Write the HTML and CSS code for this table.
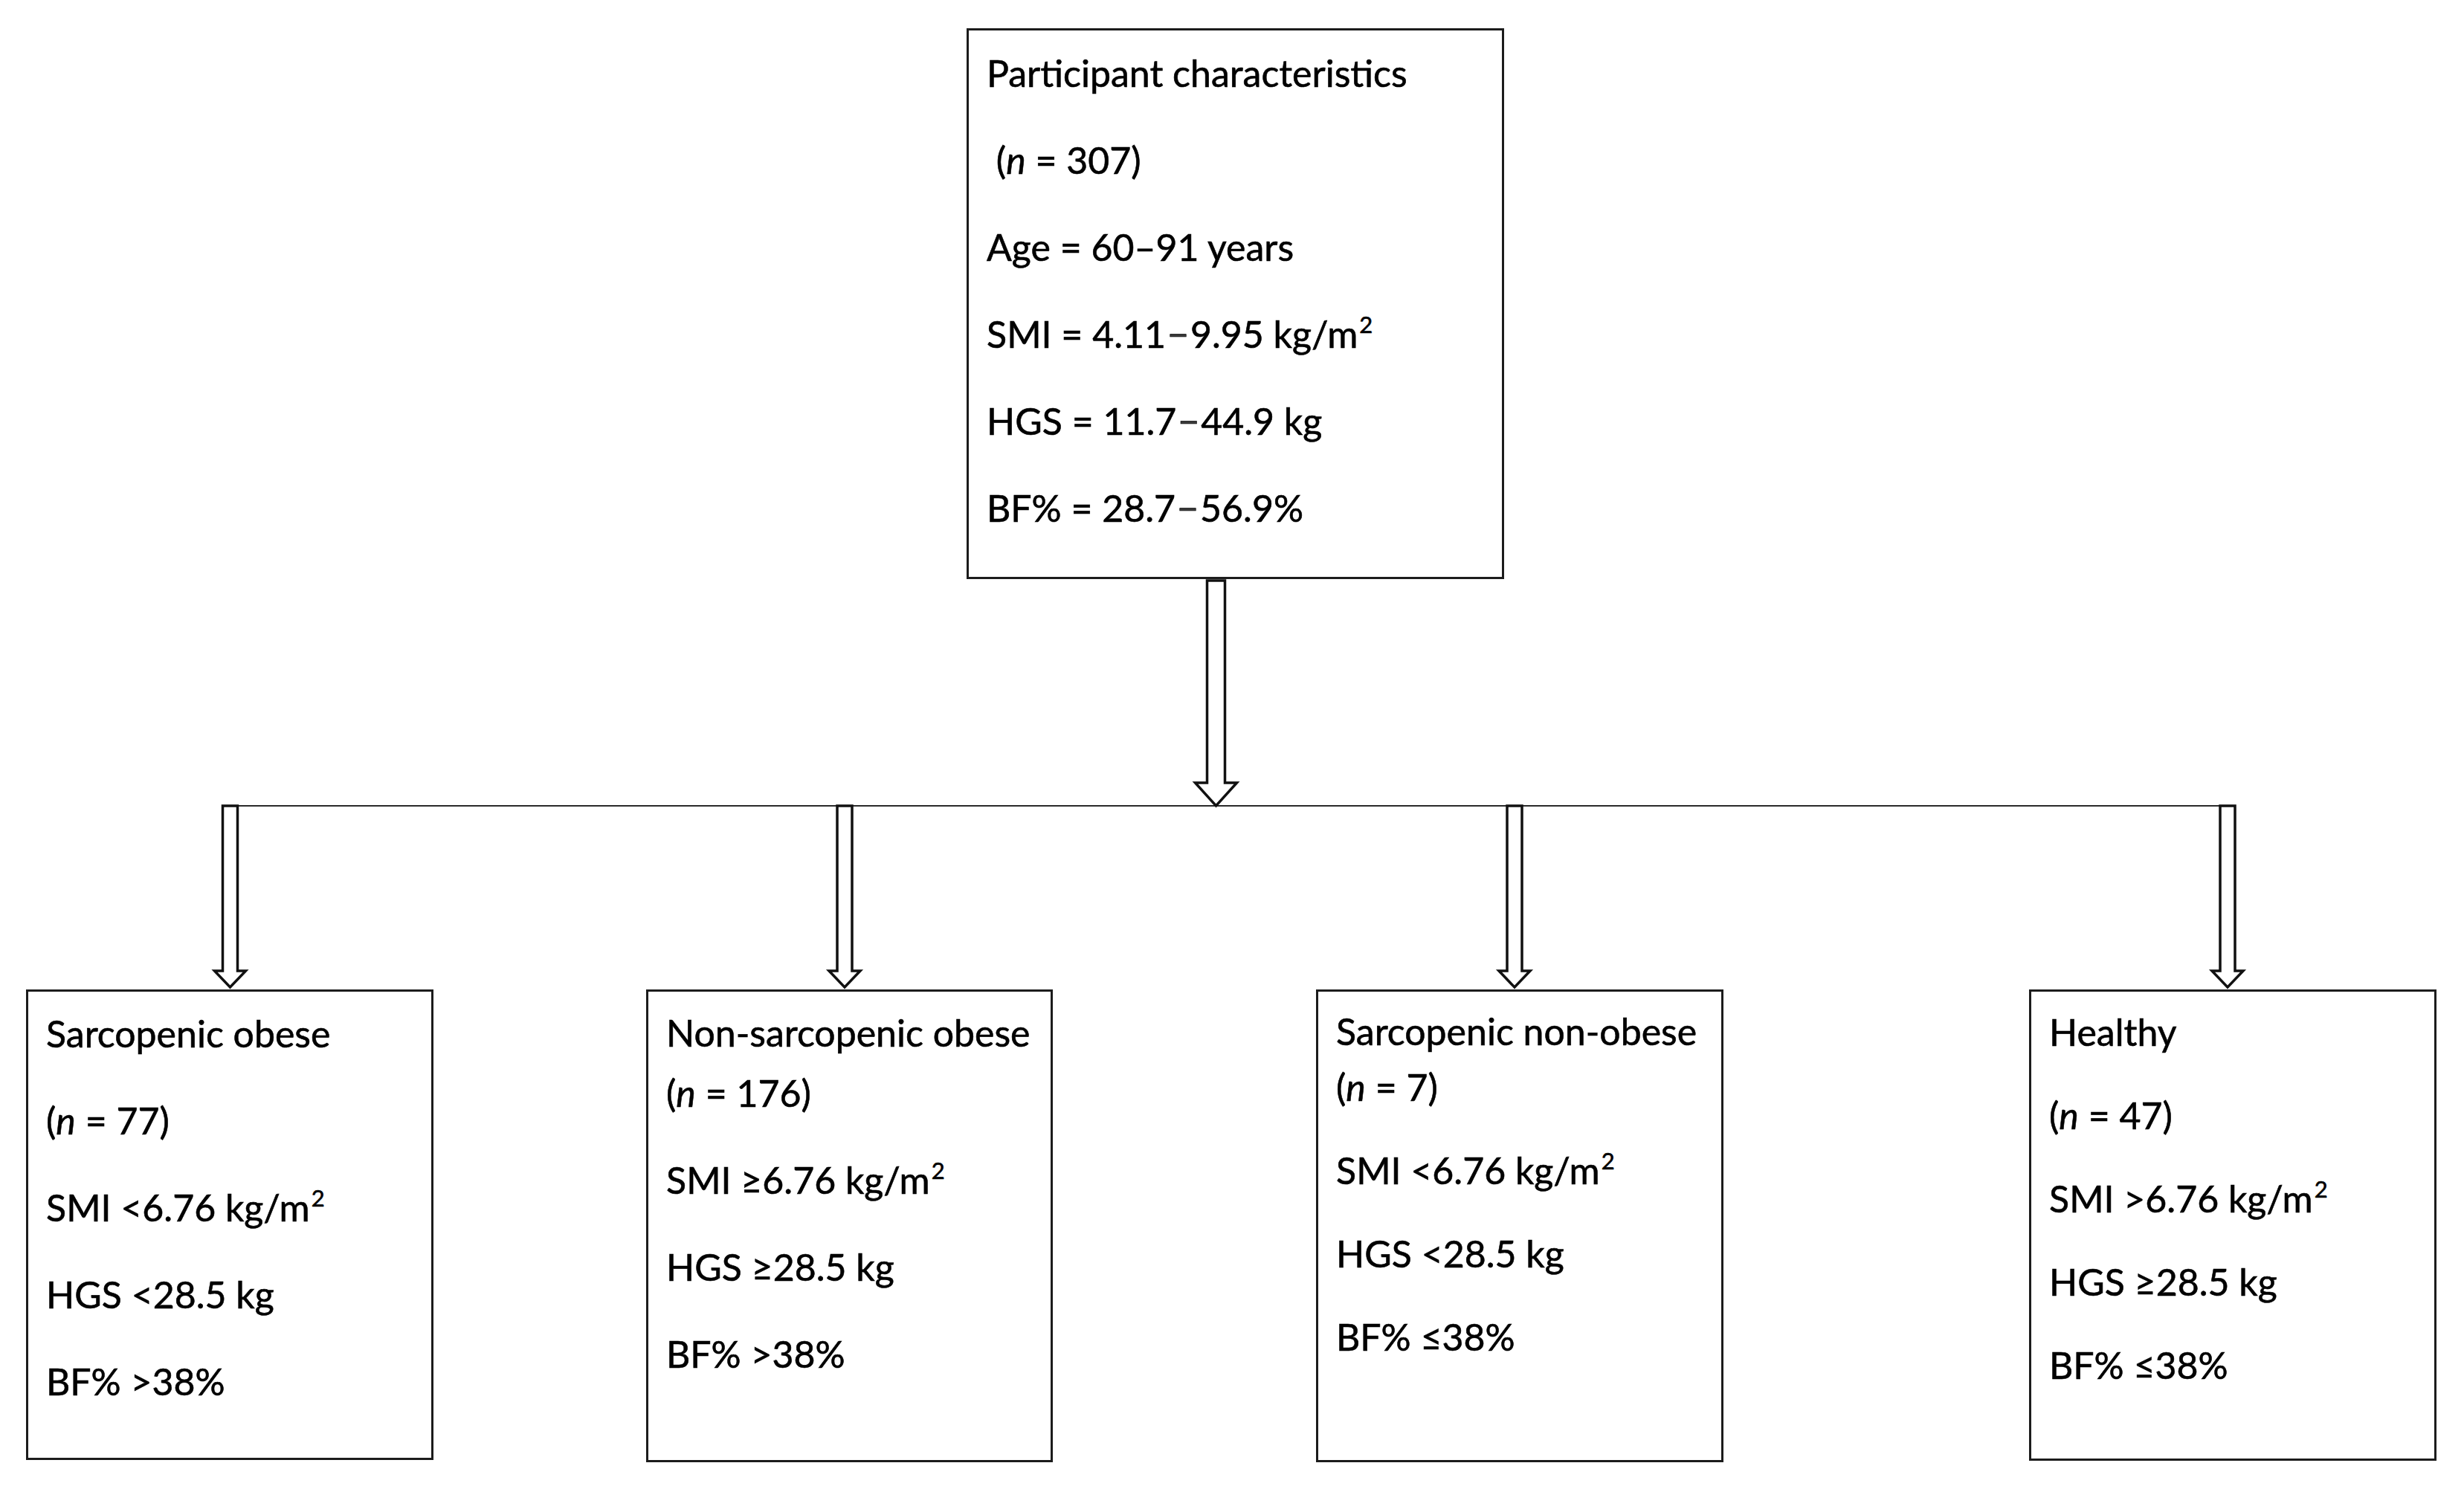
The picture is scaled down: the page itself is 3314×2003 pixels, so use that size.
FILE: index.html
```html
<!DOCTYPE html>
<html lang="en">
<head>
<meta charset="utf-8">
<title>Participant characteristics flowchart</title>
<link rel="stylesheet" href="styles.css">
</head>
<body>
<div class="chart">
  <div class="top-row">
    <div class="box box-main">
      <div class="line">Participant characteristics</div>
      <div class="line">&nbsp;(<i>n</i> = 307)</div>
      <div class="line">Age = 60–91 years</div>
      <div class="line">SMI = 4.11<span class="dash">−</span>9.95 kg/m<span class="sup">2</span></div>
      <div class="line">HGS = 11.7<span class="dash">−</span>44.9 kg</div>
      <div class="line">BF% = 28.7<span class="dash">−</span>56.9%</div>
    </div>
  </div>

  <svg class="connector" width="3314" height="552" viewBox="0 0 3314 552" xmlns="http://www.w3.org/2000/svg">
    <line class="bus" x1="309" y1="305" x2="2996" y2="305"/>
    <polygon class="arrow" points="1623.5,2 1647.5,2 1647.5,274 1663.5,274 1635.5,305 1607.5,274 1623.5,274"/>
    <polygon class="arrow" points="299.5,305 319.5,305 319.5,527 330.5,527 309.5,549 288.5,527 299.5,527"/>
    <polygon class="arrow" points="1126,305 1146,305 1146,527 1157,527 1136,549 1115,527 1126,527"/>
    <polygon class="arrow" points="2027,305 2047,305 2047,527 2058,527 2037,549 2016,527 2027,527"/>
    <polygon class="arrow" points="2986,305 3006,305 3006,527 3017,527 2996,549 2975,527 2986,527"/>
  </svg>

  <div class="groups">
    <div class="box g1">
      <div class="line">Sarcopenic obese</div>
      <div class="line">(<i>n</i> = 77)</div>
      <div class="line">SMI &lt;6.76 kg/m<span class="sup">2</span></div>
      <div class="line">HGS &lt;28.5 kg</div>
      <div class="line">BF% &gt;38%</div>
    </div>
    <div class="box g2">
      <div class="line">Non-sarcopenic obese</div>
      <div class="line tight">(<i>n</i> = 176)</div>
      <div class="line">SMI ≥6.76 kg/m<span class="sup">2</span></div>
      <div class="line">HGS ≥28.5 kg</div>
      <div class="line">BF% &gt;38%</div>
    </div>
    <div class="box g3">
      <div class="line">Sarcopenic non-obese</div>
      <div class="line tight">(<i>n</i> = 7)</div>
      <div class="line">SMI &lt;6.76 kg/m<span class="sup">2</span></div>
      <div class="line">HGS &lt;28.5 kg</div>
      <div class="line">BF% ≤38%</div>
    </div>
    <div class="box g4">
      <div class="line">Healthy</div>
      <div class="line">(<i>n</i> = 47)</div>
      <div class="line">SMI &gt;6.76 kg/m<span class="sup">2</span></div>
      <div class="line">HGS ≥28.5 kg</div>
      <div class="line">BF% ≤38%</div>
    </div>
  </div>
</div>
</body>
</html>
```

FILE: styles.css
```css
html, body {
  margin: 0;
  padding: 0;
  background: #ffffff;
}

body {
  width: 3314px;
  height: 2003px;
  overflow: hidden;
  font-family: "Lato", "Liberation Sans", sans-serif;
  color: #000000;
}

.chart {
  width: 3314px;
}

.top-row {
  display: flex;
  padding-top: 38px;
  padding-left: 1300px;
}

.box {
  box-sizing: border-box;
  border: 3px solid #1c1c1c;
  background: #ffffff;
  display: flex;
  flex-direction: column;
  font-size: 50px;
  line-height: 60px;
  padding-left: 24px;
  -webkit-text-stroke: 0.6px #000000;
}

.line {
  white-space: nowrap;
}

.line i {
  font-style: italic;
}

.dash {
  color: #3a3a3a;
  margin: 0 2px;
}

.sup {
  font-size: 31px;
  line-height: 0;
  position: relative;
  top: -20px;
  margin-left: 2px;
}

.box-main {
  width: 723px;
  height: 741px;
  padding-top: 27px;
  gap: 57px;
}

.connector {
  display: block;
}

.connector .bus {
  stroke: #2a2a2a;
  stroke-width: 2;
}

.connector .arrow {
  fill: #ffffff;
  stroke: #111111;
  stroke-width: 3.5;
  stroke-linejoin: miter;
}

.groups {
  display: flex;
  align-items: flex-start;
}

.g1 {
  margin-left: 35px;
  width: 548px;
  height: 633px;
  padding-top: 26px;
  gap: 57px;
}

.g2 {
  margin-left: 286px;
  width: 547px;
  height: 636px;
  padding-top: 25px;
  gap: 57px;
}

.g2 .tight {
  margin-top: -36px;
}

.g3 {
  margin-left: 354px;
  width: 548px;
  height: 636px;
  padding-top: 23px;
  gap: 52px;
}

.g3 .tight {
  margin-top: -37px;
}

.g4 {
  margin-left: 411px;
  width: 548px;
  height: 634px;
  padding-top: 24px;
  gap: 52px;
}
```
